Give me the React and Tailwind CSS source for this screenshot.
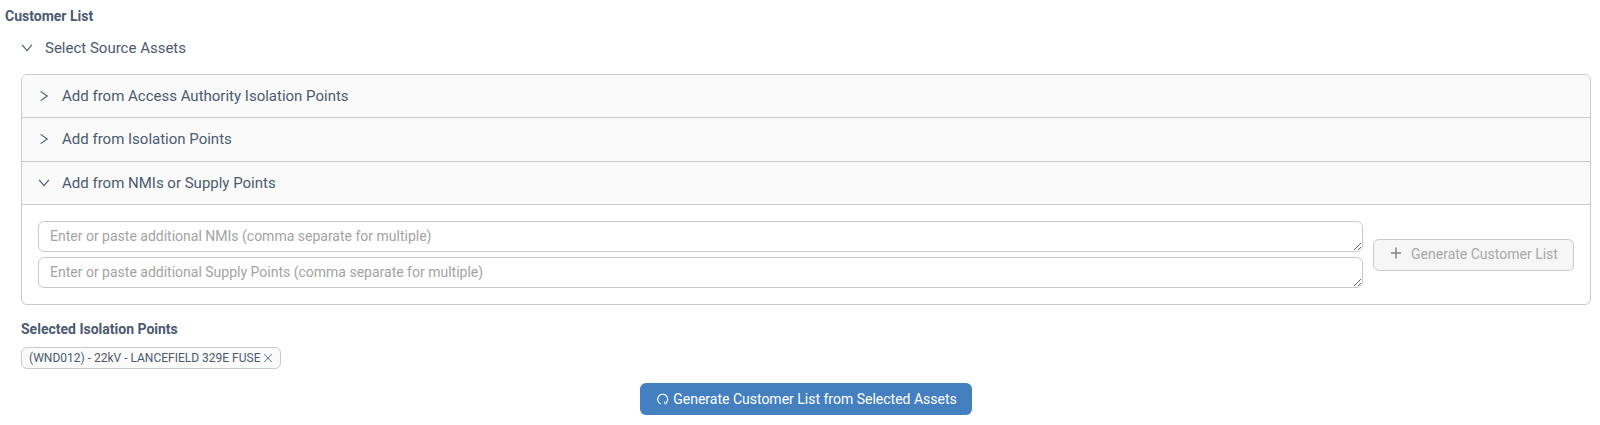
import React from "react";

function Chevron({ open }) {
  return (
    <svg viewBox="0 0 12 12" className="size-3 shrink-0" fill="none" stroke="currentColor" strokeWidth="1.15">
      <path d={open ? "M1.1 2.8L6 8.7L10.9 2.8" : "M2.6 1.4L9.2 6L2.6 10.6"} />
    </svg>
  );
}

function PlusIcon() {
  return (
    <svg viewBox="0 0 14 14" className="mb-[3px] size-[14px] shrink-0 text-[#858585]" fill="none" stroke="currentColor" strokeWidth="1.5">
      <path d="M7 1.5V12.5M2 7H12" />
    </svg>
  );
}

function CloseIcon() {
  return (
    <svg viewBox="0 0 10 10" className="ml-[3px] size-[10px] shrink-0 text-[#5d7192]" fill="none" stroke="currentColor" strokeWidth="1">
      <path d="M1.2 1L8.8 9M8.8 1L1.2 9" />
    </svg>
  );
}

function LoopIcon() {
  return (
    <svg viewBox="0 0 14 14" className="size-[14px] shrink-0" fill="none" stroke="currentColor" strokeWidth="1.1">
      <path d="M5.8 11.9A5 5 0 1 1 10.9 11.1" />
      <path d="M9.6 9.4V11.7H11.9" strokeWidth="0.8" />
    </svg>
  );
}

function PanelHeader({ open, label, className }) {
  return (
    <div className={`flex items-center border-b border-[#c9c9c9] bg-[#fafafa] pl-4 ${className}`}>
      <Chevron open={open} />
      <span className="ml-3 text-[15px] leading-6">{label}</span>
    </div>
  );
}

function Field({ placeholder }) {
  return (
    <textarea
      rows={1}
      placeholder={placeholder}
      className="block h-[31px] w-full resize-y overflow-hidden rounded-md border border-[#c9c9c9] bg-white px-[11px] pt-[3px] pb-1 text-[14px] leading-[22px] placeholder:text-[#a3a3a3]"
    />
  );
}

export default function App() {
  return (
    <main className="h-[425px] w-[1600px] overflow-hidden bg-white pl-[5px] font-['Roboto',sans-serif] text-[14px] text-[#4a5a70]">
      <h1 className="pt-[5px] text-[14px] leading-[22px] font-bold">Customer List</h1>
      <div className="pr-[9px] pl-4">
        <div className="mt-[9px] flex h-6 items-center">
          <Chevron open />
          <span className="ml-3 text-[15px] leading-6">Select Source Assets</span>
        </div>
        <section className="mt-[14px] h-[231px] w-[1570px] overflow-hidden rounded-md border border-[#c9c9c9]">
          <PanelHeader label="Add from Access Authority Isolation Points" className="h-[43px]" />
          <PanelHeader label="Add from Isolation Points" className="h-[44px] pb-px" />
          <PanelHeader open label="Add from NMIs or Supply Points" className="h-[43px]" />
          <div className="flex items-center gap-[10px] p-4">
            <div className="flex w-[1325px] flex-col gap-[5px]">
              <Field placeholder="Enter or paste additional NMIs (comma separate for multiple)" />
              <Field placeholder="Enter or paste additional Supply Points (comma separate for multiple)" />
            </div>
            <button className="flex h-8 w-[201px] items-center justify-center rounded-md border border-[#c9c9c9] bg-[#f6f6f6] text-[#a8a8a8]">
              <PlusIcon />
              <span className="ml-2">Generate Customer List</span>
            </button>
          </div>
        </section>
        <h2 className="mt-[13px] text-[14px] leading-[22px] font-bold">Selected Isolation Points</h2>
        <div className="mt-[7px] flex h-[22px] w-[260px] items-center rounded-md border border-[#c9c9c9] bg-[#fafafa] px-[7px] text-[12px] leading-5">
          <span className="whitespace-nowrap">(WND012) - 22kV - LANCEFIELD 329E FUSE</span>
          <CloseIcon />
        </div>
        <div className="mt-[14px] flex justify-center">
          <button className="flex h-8 w-[332px] items-center justify-center rounded-md bg-[#4480bf] text-white">
            <LoopIcon />
            <span className="ml-1">Generate Customer List from Selected Assets</span>
          </button>
        </div>
      </div>
    </main>
  );
}
